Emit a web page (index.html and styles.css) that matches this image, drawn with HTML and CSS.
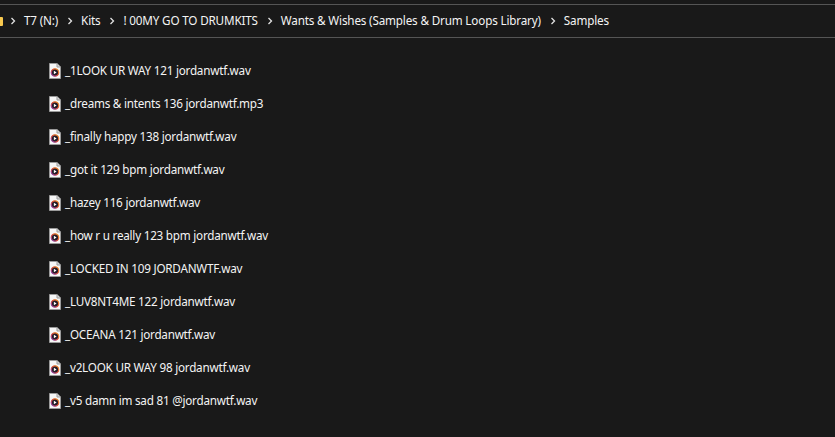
FILE: index.html
```html
<!DOCTYPE html>
<html lang="en">
<head>
<meta charset="utf-8">
<title>Samples</title>
<link rel="stylesheet" href="styles.css">
</head>
<body>
<svg class="defs" width="0" height="0" aria-hidden="true">
  <defs>
    <linearGradient id="ring" x1="1" y1="0" x2="0" y2="1">
      <stop offset="0" stop-color="#f59a23"/>
      <stop offset="0.55" stop-color="#e0483e"/>
      <stop offset="1" stop-color="#7a3fc4"/>
    </linearGradient>
    <symbol id="file" viewBox="0 0 12 16">
      <path d="M.5.5h7.5l3.5 3.5v11.5H.5z" fill="#f6f6f6" stroke="#9a9a9a"/>
      <path d="M8 .5v3.5h3.5" fill="#d8d8d8" stroke="#9a9a9a"/>
      <circle cx="6" cy="9.5" r="3.7" fill="#221c28" stroke="url(#ring)" stroke-width="1.3"/>
      <path d="M4.9 7.8v3.4l2.7-1.7z" fill="#fff"/>
    </symbol>
    <symbol id="chev" viewBox="0 0 6 8">
      <path d="M1.5 1l3 3-3 3" fill="none" stroke="#e2e2e2" stroke-width="1.3"/>
    </symbol>
  </defs>
</svg>
<div class="window">
  <nav class="crumbs">
    <span class="folder"></span>
    <svg class="chev"><use href="#chev"/></svg><span class="crumb">T7 (N:)</span>
    <svg class="chev"><use href="#chev"/></svg><span class="crumb">Kits</span>
    <svg class="chev"><use href="#chev"/></svg><span class="crumb">! 00MY GO TO DRUMKITS</span>
    <svg class="chev"><use href="#chev"/></svg><span class="crumb">Wants &amp; Wishes (Samples &amp; Drum Loops Library)</span>
    <svg class="chev"><use href="#chev"/></svg><span class="crumb">Samples</span>
  </nav>
  <ul class="files">
    <li class="file"><svg class="icon"><use href="#file"/></svg><span class="name">_1LOOK UR WAY 121 jordanwtf.wav</span></li>
    <li class="file"><svg class="icon"><use href="#file"/></svg><span class="name">_dreams &amp; intents 136 jordanwtf.mp3</span></li>
    <li class="file"><svg class="icon"><use href="#file"/></svg><span class="name">_finally happy 138 jordanwtf.wav</span></li>
    <li class="file"><svg class="icon"><use href="#file"/></svg><span class="name">_got it 129 bpm jordanwtf.wav</span></li>
    <li class="file"><svg class="icon"><use href="#file"/></svg><span class="name">_hazey 116 jordanwtf.wav</span></li>
    <li class="file"><svg class="icon"><use href="#file"/></svg><span class="name">_how r u really 123 bpm jordanwtf.wav</span></li>
    <li class="file"><svg class="icon"><use href="#file"/></svg><span class="name">_LOCKED IN 109 JORDANWTF.wav</span></li>
    <li class="file"><svg class="icon"><use href="#file"/></svg><span class="name">_LUV8NT4ME 122 jordanwtf.wav</span></li>
    <li class="file"><svg class="icon"><use href="#file"/></svg><span class="name">_OCEANA 121 jordanwtf.wav</span></li>
    <li class="file"><svg class="icon"><use href="#file"/></svg><span class="name">_v2LOOK UR WAY 98 jordanwtf.wav</span></li>
    <li class="file"><svg class="icon"><use href="#file"/></svg><span class="name">_v5 damn im sad 81 @jordanwtf.wav</span></li>
  </ul>
</div>
</body>
</html>
```
FILE: styles.css
```css
* { box-sizing: border-box; }
html, body { margin: 0; height: 100%; background: #191919; overflow: hidden; }
.defs { position: absolute; }
.window {
  height: 437px;
  padding-top: 4px;
  background: #191919;
  color: #f4f4f4;
  font-family: "Noto Sans", sans-serif;
  font-size: 11.7px;
  letter-spacing: -0.23px;
}
.crumbs {
  display: flex;
  align-items: center;
  height: 34px;
  border-top: 1px solid #555;
  border-bottom: 1px solid #555;
  white-space: nowrap;
}
.folder {
  width: 3px;
  height: 9px;
  margin-right: 7px;
  background: #f8c94f;
  border-radius: 0 1px 1px 0;
}
.chev { width: 6px; height: 8px; flex: none; margin-right: 8px; }
.crumb { margin: 0 9px 2px 0; letter-spacing: -0.17px; }
.files {
  list-style: none;
  margin: 0;
  padding: 16px 0 0 49px;
}
.file {
  display: flex;
  align-items: center;
  height: 33px;
  white-space: nowrap;
}
.icon { width: 12px; height: 16px; flex: none; margin-right: 4px; }
.name { margin-bottom: 2px; }
```
